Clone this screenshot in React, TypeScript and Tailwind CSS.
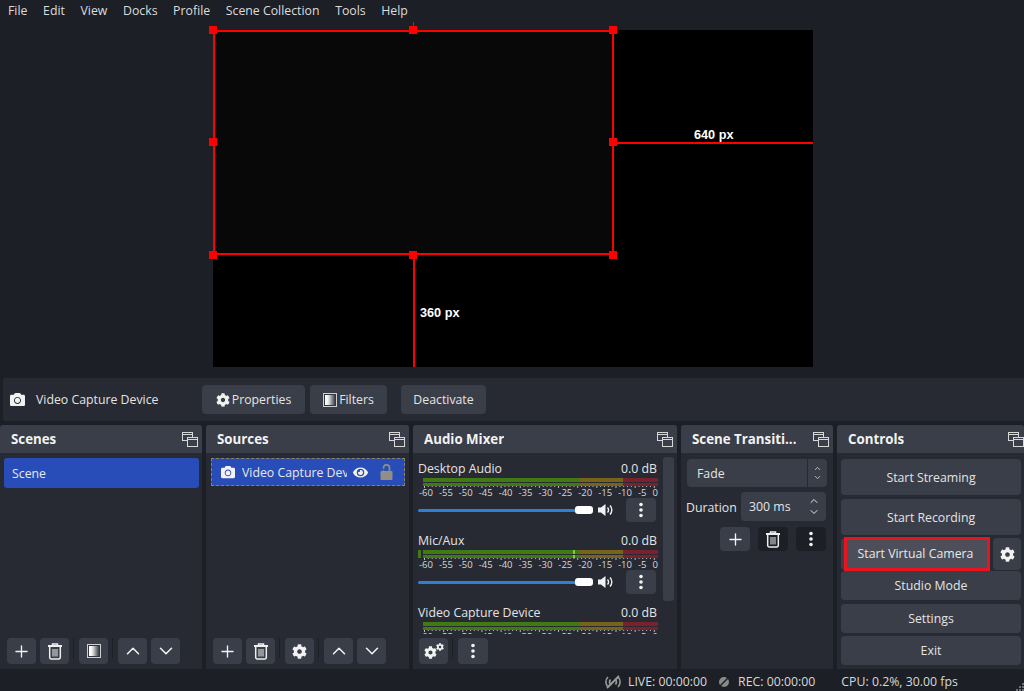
import React from 'react';
import { Plus, ChevronUp, ChevronDown } from 'lucide-react';
import { FaCamera, FaCog, FaEye } from 'react-icons/fa';

const DockIcon = () => (
  <svg width="16" height="15" viewBox="0 0 16 15" fill="none" stroke="#d8d8d8" strokeWidth="1" className="shrink-0">
    <rect x="0.5" y="0.5" width="10" height="8" />
    <line x1="0.5" y1="2.5" x2="10.5" y2="2.5" />
    <rect x="5.5" y="5.5" width="10" height="9" fill="#3a3e48" />
    <line x1="5.5" y1="7.5" x2="15.5" y2="7.5" />
  </svg>
);

const TrashIcon = () => (
  <svg width="16" height="17" viewBox="0 0 16 17" fill="none" stroke="#eeeeee" strokeWidth="1.5">
    <path d="M1 3h14" strokeWidth="2" />
    <path d="M5.5 2.5V1h5v1.5" />
    <path d="M2.7 4v10.5a1.5 1.5 0 0 0 1.5 1.5h7.6a1.5 1.5 0 0 0 1.5-1.5V4" />
    <path d="M6 6v7.5M8 6v7.5M10 6v7.5" strokeWidth="1" />
  </svg>
);

const FilterIcon = ({ id }: { id: string }) => (
  <svg width="14" height="14" viewBox="0 0 14 14">
    <defs>
      <linearGradient id={id} x1="0" x2="1" y1="0" y2="0">
        <stop offset="0" stopColor="#ffffff" />
        <stop offset="0.3" stopColor="#f0f0f0" />
        <stop offset="1" stopColor="#3a3e48" />
      </linearGradient>
    </defs>
    <rect x="0.5" y="0.5" width="13" height="13" fill="#33363f" stroke="#cfcfcf" />
    <rect x="2" y="2" width="10" height="10" fill={`url(#${id})`} />
  </svg>
);

const LockIcon = () => (
  <svg width="13" height="16" viewBox="0 0 13 16" fill="none" className="shrink-0">
    <rect x="0.5" y="7" width="12" height="9" rx="1" fill="#8f8f86" />
    <path d="M3.5 7V3.8a3 3 0 0 1 6 0V7" stroke="#8f8f86" strokeWidth="1.7" />
    <path d="M2 5.5h3" stroke="#284cb8" strokeWidth="1.5" />
  </svg>
);

const Kebab = () => (
  <svg width="4" height="16" viewBox="0 0 4 16" fill="#f2f2f2">
    <circle cx="2" cy="2.5" r="1.8" />
    <circle cx="2" cy="8" r="1.8" />
    <circle cx="2" cy="13.5" r="1.8" />
  </svg>
);

const Speaker = () => (
  <svg width="16" height="14" viewBox="0 0 16 14" className="shrink-0">
    <path d="M0 4.5h3L7.5 1v12L3 9.5H0z" fill="#f2f2f2" />
    <path d="M9.5 4.5a3.5 3.5 0 0 1 0 5" fill="none" stroke="#f2f2f2" strokeWidth="1.4" />
    <path d="M12 2.5a6.5 6.5 0 0 1 0 9" fill="none" stroke="#f2f2f2" strokeWidth="1.4" />
  </svg>
);

const IconBtn = ({ children, dark = false, className = '' }: { children: React.ReactNode; dark?: boolean; className?: string }) => (
  <div className={`w-[29px] h-[26px] rounded-[4px] flex items-center justify-center shrink-0 ${dark ? 'bg-[#1d1f26]' : 'bg-[#3a3e48]'} ${className}`}>
    {children}
  </div>
);

const Sep = () => <div className="w-px h-[20px] bg-[#1d1f26] shrink-0 ml-[4px] mr-[5px]" />;

const Panel = ({ title, width, head = 'pr-[4px]', children }: { title: string; width: string; head?: string; children: React.ReactNode }) => (
  <div className={`${width} shrink-0 bg-[#272a33] rounded-t-[3px] flex flex-col overflow-hidden`}>
    <div className={`h-[28px] bg-[#3a3e48] flex items-center justify-between pl-[11px] shrink-0 ${head}`}>
      <span className="font-bold text-[13.3px] text-[#f2f2f2] truncate pt-[1px]">{title}</span>
      <DockIcon />
    </div>
    {children}
  </div>
);

const labels = ['-60', '-55', '-50', '-45', '-40', '-35', '-30', '-25', '-20', '-15', '-10', '-5', '0'];

const Meter = ({ peak = false }: { peak?: boolean }) => (
  <div className="relative pl-[5px]">
    {peak && <div className="absolute left-0 top-0 w-[3px] h-[8px] bg-[#3f7a12]" />}
    <div className="h-[8px] flex flex-col justify-between bg-[#272a33]">
      {[0, 1].map(i => (
        <div key={i} className="h-[3.5px] flex">
          <div className="w-[157px] bg-[#3f7a12] relative">
            {peak && <div className="absolute left-[150px] top-0 w-[2px] h-full bg-[#7fd02c]" />}
          </div>
          <div className="w-[43px] bg-[#77641a]" />
          <div className="flex-1 bg-[#7a2130]" />
        </div>
      ))}
    </div>
    <svg width="235" height="2" className="block">
      {Array.from({ length: 61 }).map((_, i) => (
        <rect key={i} x={1 + i * 3.83} y="0" width="1" height={i % 5 === 0 ? 2 : 1} fill="#b8b8b8" />
      ))}
    </svg>
    <div className="flex justify-between text-[9.5px] leading-[9px] text-[#d8d8d8] -ml-[4px]">
      {labels.map(l => (
        <span key={l}>{l}</span>
      ))}
    </div>
  </div>
);

const Channel = ({ name, peak, showSlider = true }: { name: string; peak?: boolean; showSlider?: boolean }) => (
  <div className="w-[240px]">
    <div className="flex justify-between text-[12.3px] leading-[17px] text-[#e4e4e4] mb-[1px] pr-[1px]">
      <span>{name}</span>
      <span>0.0 dB</span>
    </div>
    <Meter peak={peak} />
    {showSlider && (
      <div className="flex items-center mt-[1px] h-[24px]">
        <div className="relative w-[175px] h-[3px] rounded-full bg-[#2f7fd6]">
          <div className="absolute right-0 -top-[2.5px] w-[18px] h-[8px] rounded-[3px] bg-white" />
        </div>
        <div className="ml-[5px]"><Speaker /></div>
        <div className="ml-auto w-[30px] h-[24px] rounded-[4px] bg-[#3a3e48] flex items-center justify-center mr-[2px]"><Kebab /></div>
      </div>
    )}
  </div>
);

const CtrlBtn = ({ label, h }: { label: string; h: string }) => (
  <div className={`${h} rounded-[4px] bg-[#3a3e48] flex items-center justify-center pt-[2px] text-[12.3px] text-[#e4e4e4]`}>{label}</div>
);

const ContextBtn = ({ icon, label, width }: { icon?: React.ReactNode; label: string; width: string }) => (
  <div className={`${width} h-[29px] rounded-[4px] bg-[#3a3e48] flex items-center justify-center gap-[2px] text-[12.3px] text-[#e4e4e4]`}>
    {icon}
    <span className="pt-[2px]">{label}</span>
  </div>
);

// selection handles, relative to the preview area
const handles = [
  'left-[209px] top-[4px]', 'left-[409px] top-[4px]', 'left-[609px] top-[4px]',
  'left-[209px] top-[116px]', 'left-[609px] top-[116px]',
  'left-[209px] top-[229px]', 'left-[409px] top-[229px]', 'left-[609px] top-[229px]',
];

const DockFooterArrows = () => (
  <>
    <IconBtn className="mr-[4px]"><ChevronUp size={22} strokeWidth={1.7} color="#f2f2f2" /></IconBtn>
    <IconBtn><ChevronDown size={22} strokeWidth={1.7} color="#f2f2f2" /></IconBtn>
  </>
);

export default function App() {
  return (
    <div className="w-[1024px] h-[691px] bg-[#1d1f26] flex flex-col overflow-hidden text-[#e4e4e4]" style={{ fontFamily: '"Open Sans", sans-serif' }}>
      <div className="h-[22px] flex items-center gap-[15.6px] pl-[8px] text-[12.3px] text-[#dcdcdc] shrink-0">
        {['File', 'Edit', 'View', 'Docks', 'Profile', 'Scene Collection', 'Tools', 'Help'].map(m => (
          <span key={m}>{m}</span>
        ))}
      </div>

      {/* preview canvas */}
      <div className="relative h-[356px] shrink-0" style={{ fontFamily: '"Liberation Sans", sans-serif' }}>
        <div className="absolute left-[213px] top-[8px] w-[600px] h-[337px] bg-black" />
        <div className="absolute left-[213px] top-[8px] w-[401px] h-[225px] bg-[#080808] border-2 border-[#ff0000]" />
        <div className="absolute left-[413px] top-0 w-[1px] h-[8px] bg-[#ff0000]" />
        <div className="absolute left-[613px] top-[120px] w-[200px] h-[2px] bg-[#ff0000]" />
        <div className="absolute left-[413px] top-[232px] w-[2px] h-[113px] bg-[#ff0000]" />
        {handles.map(h => (
          <div key={h} className={`absolute w-[8px] h-[8px] bg-[#ff0000] ${h}`} />
        ))}
        <span className="absolute left-[694px] top-[104px] font-bold text-[12.7px] text-white">640 px</span>
        <span className="absolute left-[420px] top-[282px] font-bold text-[12.7px] text-white">360 px</span>
      </div>

      {/* context bar */}
      <div className="h-[43px] ml-[3px] bg-[#272a33] rounded-l-[3px] flex items-center shrink-0">
        <FaCamera className="ml-[7px] text-[#f2f2f2] text-[15px] shrink-0" />
        <span className="ml-[11px] w-[166px] text-[12.3px] pt-[2px]">Video Capture Device</span>
        <ContextBtn width="w-[103px]" icon={<FaCog className="text-[14px] text-[#f2f2f2]" />} label="Properties" />
        <div className="w-[5px]" />
        <ContextBtn width="w-[77px]" icon={<FilterIcon id="fg1" />} label="Filters" />
        <div className="w-[14px]" />
        <ContextBtn width="w-[85px]" label="Deactivate" />
      </div>

      {/* docks */}
      <div className="h-[244px] mt-[4px] flex gap-[4px] shrink-0">
        <Panel title="Scenes" width="w-[202px]">
          <div className="flex-1 pt-[5px] px-[4px]">
            <div className="h-[30px] w-[195px] rounded-[3px] bg-[#284cb8] flex items-center pl-[8px] pt-[2px] text-[12.3px] text-[#e8e8e8]">Scene</div>
          </div>
          <div className="h-[31px] pl-[7px] flex items-start shrink-0">
            <IconBtn className="mr-[4px]"><Plus size={19} strokeWidth={1.7} color="#f2f2f2" /></IconBtn>
            <IconBtn><TrashIcon /></IconBtn>
            <Sep />
            <IconBtn><FilterIcon id="fg2" /></IconBtn>
            <Sep />
            <DockFooterArrows />
          </div>
        </Panel>

        <Panel title="Sources" width="w-[203px]">
          <div className="flex-1 pt-[5px] px-[5px]">
            <div className="h-[28px] w-[194px] bg-[#284cb8] border border-dashed border-[#8f8258] flex items-center pl-[9px] text-[12.3px] text-[#e8e8e8]">
              <FaCamera className="text-[14px] text-[#f2f2f2] shrink-0" />
              <span className="ml-[7px] w-[105px] pt-[2px] overflow-hidden whitespace-nowrap">Video Capture Device</span>
              <FaEye className="ml-[6px] text-[15px] text-[#f2f2f2] shrink-0" />
              <div className="ml-[12px]"><LockIcon /></div>
            </div>
          </div>
          <div className="h-[31px] pl-[7px] flex items-start shrink-0">
            <IconBtn className="mr-[4px]"><Plus size={19} strokeWidth={1.7} color="#f2f2f2" /></IconBtn>
            <IconBtn><TrashIcon /></IconBtn>
            <Sep />
            <IconBtn><FaCog className="text-[15px] text-[#f2f2f2]" /></IconBtn>
            <Sep />
            <DockFooterArrows />
          </div>
        </Panel>

        <Panel title="Audio Mixer" width="w-[264px]">
          <div className="h-[181px] flex shrink-0 overflow-hidden pl-[5px]">
            <div className="w-[240px] flex flex-col pt-[7px]">
              <Channel name="Desktop Audio" />
              <div className="mt-[10px]"><Channel name="Mic/Aux" peak /></div>
              <div className="mt-[10px]"><Channel name="Video Capture Device" showSlider={false} /></div>
            </div>
            <div className="ml-[5px] mt-[4px] w-[11px] h-[144px] rounded-[3px] bg-[#3a3e48]" />
          </div>
          <div className="pl-[6px] pt-[4px] flex items-start">
            <IconBtn>
              <div className="flex items-start">
                <FaCog className="text-[13px] text-[#f2f2f2] mt-[3px]" />
                <FaCog className="text-[8px] text-[#f2f2f2] -ml-[1px]" />
              </div>
            </IconBtn>
            <Sep />
            <IconBtn className="w-[30px]"><Kebab /></IconBtn>
          </div>
        </Panel>

        <Panel title="Scene Transiti..." width="w-[152px]">
          <div className="pt-[6px] pl-[6px]">
            <div className="w-[140px] h-[28px] rounded-[4px] bg-[#3a3e48] flex items-center pl-[10px] text-[12.3px]">
              <span className="flex-1 pt-[2px]">Fade</span>
              <div className="w-[20px] h-full border-l border-[#272a33] flex flex-col items-center justify-center">
                <ChevronUp size={9} strokeWidth={2} />
                <ChevronDown size={9} strokeWidth={2} />
              </div>
            </div>
            <div className="flex items-center mt-[5px] text-[12.3px]">
              <span className="w-[55px] -ml-px pt-[3px]">Duration</span>
              <div className="w-[85px] h-[29px] rounded-[4px] bg-[#3a3e48] flex items-center pl-[8px]">
                <span className="flex-1 pt-[1px]">300 ms</span>
                <div className="w-[24px] flex flex-col items-center -space-y-px">
                  <ChevronUp size={12} strokeWidth={2} />
                  <ChevronDown size={12} strokeWidth={2} />
                </div>
              </div>
            </div>
            <div className="flex justify-end gap-[8px] mt-[6px] pr-[7px]">
              <IconBtn className="!h-[24px] w-[30px]"><Plus size={19} strokeWidth={1.7} color="#f2f2f2" /></IconBtn>
              <IconBtn dark className="!h-[24px] w-[30px]"><TrashIcon /></IconBtn>
              <IconBtn dark className="!h-[24px] w-[30px]"><Kebab /></IconBtn>
            </div>
          </div>
        </Panel>

        <Panel title="Controls" width="w-[187px]" head="pr-0">
          <div className="pt-[6px] pl-[4px] pr-[3px] flex flex-col gap-[4px]">
            <CtrlBtn label="Start Streaming" h="h-[36px]" />
            <CtrlBtn label="Start Recording" h="h-[36px]" />
            <div className="flex h-[32px] gap-[3px] items-center -mt-[1px] -mb-[3px]">
              <div className="relative flex-1 h-full rounded-[4px] bg-[#3a3e48]">
                {/* red highlight drawn over the button */}
                <div className="absolute left-[3px] -top-[1px] w-[146px] h-[34px] border-[3px] border-[#e8141e] bg-[#4c4f5a] flex items-center justify-center pr-[3px] text-[12.3px] text-[#e8e8e8]">
                  Start Virtual Camera
                </div>
              </div>
              <div className="w-[28px] h-full rounded-[4px] bg-[#3a3e48] flex items-center justify-center">
                <FaCog className="text-[15px] text-[#f2f2f2]" />
              </div>
            </div>
            <CtrlBtn label="Studio Mode" h="h-[29px]" />
            <div className="flex flex-col gap-[3px]">
              <CtrlBtn label="Settings" h="h-[29px]" />
              <CtrlBtn label="Exit" h="h-[29px]" />
            </div>
          </div>
        </Panel>
      </div>

      {/* status bar */}
      <div className="relative flex-1 flex items-center text-[12.3px] text-[#d8d8d8] pl-[604px]">
        <svg width="18" height="14" viewBox="0 0 18 14" fill="none" stroke="#9a9a9a" strokeWidth="1.6" className="mt-[3px]">
          <path d="M4 2a7 7 0 0 0 0 10M14 2a7 7 0 0 1 0 10M6.5 4.5a4 4 0 0 0 0 5M11.5 4.5a4 4 0 0 1 0 5" />
          <path d="M3 13L15 1" strokeWidth="2" />
        </svg>
        <span className="ml-[6px] pt-[4px]">LIVE: 00:00:00</span>
        <svg width="12" height="12" viewBox="0 0 12 12" className="ml-[11px] mt-[3px]">
          <circle cx="6" cy="6" r="5" fill="#8a8a8a" />
          <path d="M0 12L12 0" stroke="#1d1f26" strokeWidth="1.5" />
        </svg>
        <span className="ml-[8px] pt-[4px]">REC: 00:00:00</span>
        <span className="ml-[26px] pt-[4px]">CPU: 0.2%, 30.00 fps</span>
        <svg width="10" height="10" viewBox="0 0 10 10" fill="#6d7078" className="absolute right-0 bottom-0">
          <rect x="8" y="2" width="2" height="2" />
          <rect x="5" y="5" width="2" height="2" />
          <rect x="8" y="5" width="2" height="2" />
          <rect x="2" y="8" width="2" height="2" />
          <rect x="5" y="8" width="2" height="2" />
          <rect x="8" y="8" width="2" height="2" />
        </svg>
      </div>
    </div>
  );
}
